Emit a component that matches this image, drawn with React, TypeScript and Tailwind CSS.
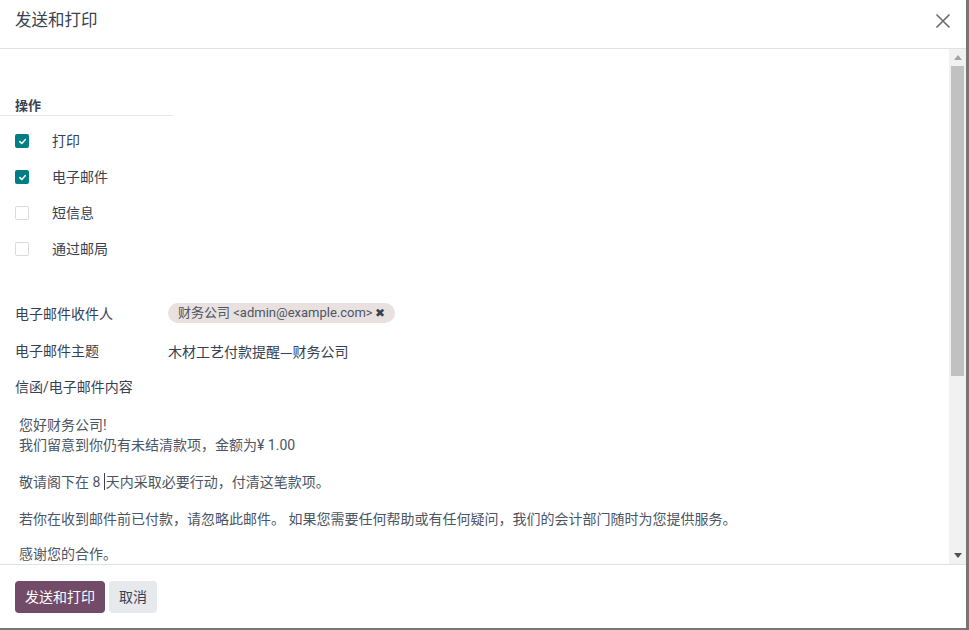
import React from "react";

const font = { fontFamily: 'Roboto, "Noto Sans CJK SC", sans-serif' };
const cjk = { fontFamily: '"Noto Sans CJK SC", sans-serif' };

function Check({ on }: { on: boolean }) {
  return on ? (
    <div className="w-[14px] h-[14px] rounded-[2px] bg-[#017e84] flex items-center justify-center">
      <svg width="9" height="9" viewBox="0 0 10 10">
        <path d="M2 5.2 L4.2 7.2 L8 3" stroke="white" strokeWidth="1.8" fill="none" strokeLinecap="round" strokeLinejoin="round" />
      </svg>
    </div>
  ) : (
    <div className="w-[14px] h-[14px] rounded-[2px] border border-[#d8dadd] bg-white" />
  );
}

function Row({ on, label }: { on: boolean; label: string }) {
  return (
    <div className="h-[36px] flex items-center pl-[15px]">
      <Check on={on} />
      <span className="ml-[23px] text-[14px] text-[#374151]">{label}</span>
    </div>
  );
}

export default function App() {
  return (
    <div className="w-[969px] h-[630px] bg-[#767676] overflow-hidden" style={font}>
      <div className="w-[966px] h-[628px] bg-white flex flex-col">
        {/* header */}
        <div className="h-[49px] border-b border-[#dee2e6] flex items-start justify-between pl-[15px] pr-[15px] pt-[10px] shrink-0">
          <div className="text-[16.5px] leading-[22px] text-[#374151]">发送和打印</div>
          <svg width="16" height="16" viewBox="0 0 16 16" className="mt-[3px]">
            <path d="M1.5 1.5 L14.5 14.5 M14.5 1.5 L1.5 14.5" stroke="#6b6b6b" strokeWidth="1.6" />
          </svg>
        </div>
        {/* body */}
        <div className="flex flex-1 min-h-0">
          <div className="flex-1 overflow-hidden text-[#374151] text-[14px]">
            <div className="pt-[47px]">
              <div className="w-[173px] border-b border-[#e5e7eb] pl-[15px] h-[20px] leading-[20px] text-[13px] font-semibold text-[#374151]">
                操作
              </div>
              <div className="mt-[7px]">
                <Row on={true} label="打印" />
                <Row on={true} label="电子邮件" />
                <Row on={false} label="短信息" />
                <Row on={false} label="通过邮局" />
              </div>
              <div className="mt-[27px]">
                <div className="h-[38px] flex items-center pl-[15px]">
                  <div className="w-[153px] pt-[3px]">电子邮件收件人</div>
                  <div className="h-[20px] rounded-full bg-[#e8e1df] flex items-center pl-[10px] pr-[10px] text-[13px] text-[#4b5563]">
                    <span>财务公司 &lt;admin@example.com&gt;</span>
                    <span className="ml-[2px] text-[12px] text-[#374151]">✖</span>
                  </div>
                </div>
                <div className="h-[38px] flex items-center pl-[15px] pt-[1px]">
                  <div className="w-[153px]">电子邮件主题</div>
                  <div style={cjk}>木材工艺付款提醒—财务公司</div>
                </div>
                <div className="h-[34px] flex items-center pl-[15px] pt-[1px]">
                  <div>信函/电子邮件内容</div>
                </div>
              </div>
              <div className="pl-[19px] mt-[11px] leading-[20px] text-[#4b5563]">
                <p>
                  您好财务公司!
                  <br />
                  我们留意到你仍有未结清款项，金额为¥ 1.00
                </p>
                <p className="mt-[17px]">
                  敬请阁下在 8 <span className="inline-block w-[1px] h-[17px] bg-[#374151] align-[-3px] mr-[1px]" />天内采取必要行动，付清这笔款项。
                </p>
                <p className="mt-[17px]">若你在收到邮件前已付款，请忽略此邮件。 如果您需要任何帮助或有任何疑问，我们的会计部门随时为您提供服务。</p>
                <p className="mt-[15px]">感谢您的合作。</p>
              </div>
            </div>
          </div>
          {/* scrollbar */}
          <div className="w-[17px] bg-[#f1f1f1] flex flex-col items-center shrink-0">
            <div className="h-[17px] w-full flex items-center justify-center">
              <svg width="8" height="5" viewBox="0 0 8 5">
                <path d="M0 5 L4 0 L8 5 Z" fill="#a3a3a3" />
              </svg>
            </div>
            <div className="w-[13px] h-[310px] bg-[#c1c1c1]" />
            <div className="flex-1" />
            <div className="h-[17px] w-full flex items-center justify-center">
              <svg width="8" height="5" viewBox="0 0 8 5">
                <path d="M0 0 L8 0 L4 5 Z" fill="#505050" />
              </svg>
            </div>
          </div>
        </div>
        {/* footer */}
        <div className="h-[64px] border-t border-[#dee2e6] shrink-0 flex items-start gap-[4px] pl-[15px] pt-[16px]">
          <button className="h-[32px] px-[10px] rounded-[4px] bg-[#714b67] text-white text-[14px]">发送和打印</button>
          <button className="h-[32px] px-[10px] rounded-[4px] bg-[#e7e9ed] text-[#374151] text-[14px]">取消</button>
        </div>
      </div>
    </div>
  );
}
